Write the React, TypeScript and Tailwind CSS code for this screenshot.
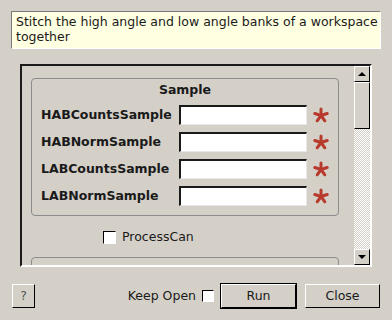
const Star = () => (
  <svg width="16" height="16" viewBox="0 0 16 16" className="shrink-0">
    {[0, 72, 144, 216, 288].map((a) => (
      <line
        key={a}
        x1="8"
        y1="8.5"
        x2="8"
        y2="2"
        stroke="#b83a2c"
        strokeWidth="3"
        strokeLinecap="round"
        transform={`rotate(${a} 8 8.5)`}
      />
    ))}
  </svg>
);

const Field = ({ label }: { label: string }) => (
  <div className="flex h-[20px] items-center">
    <span className="w-[138px] font-bold text-[#1a1a1a]">{label}</span>
    <div className="h-[20px] w-[128px] border-t-2 border-l-2 border-b border-r border-t-[#1a1a1a] border-l-[#1a1a1a] border-b-[#e8e8e8] border-r-[#e8e8e8] bg-white" />
    <div className="ml-[6px]">
      <Star />
    </div>
  </div>
);

const raised = "border border-t-white border-l-white border-b-black border-r-black bg-[#d4d0c8]";

export default function App() {
  return (
    <div
      className="flex h-[320px] w-[392px] flex-col overflow-hidden bg-[#d4d0c8] text-[12.5px] text-[#1a1a1a]"
      style={{ fontFamily: '"DejaVu Sans", sans-serif' }}
    >
      <div className="mx-[11px] mt-[11px] h-[38px] border border-t-[#7a7a7a] border-l-[#7a7a7a] border-b-white border-r-white bg-[#ffffe1] pl-[4px] pt-[2px] text-[12.5px] leading-[15px]">
        Stitch the high angle and low angle banks of a workspace together
      </div>

      <div className="ml-[20px] mt-[15px] flex h-[203px] w-[352px] border-2 border-t-[#1a1a1a] border-l-[#1a1a1a] border-b-white border-r-white">
        <div className="flex-1 overflow-hidden pl-[9px] pt-[12px]">
          <div className="w-[308px] rounded-[4px] border border-[#8c8c8c] pb-[9px] pt-[3px]">
            <div className="text-center font-bold leading-[16px]">Sample</div>
            <div className="mt-[7px] flex flex-col gap-[7px] pl-[9px]">
              <Field label="HABCountsSample" />
              <Field label="HABNormSample" />
              <Field label="LABCountsSample" />
              <Field label="LABNormSample" />
            </div>
          </div>
          <div className="mt-[12px] flex items-center pl-[72px]">
            <div className="h-[13px] w-[13px] border border-t-black border-l-black border-b-white border-r-white bg-white" />
            <span className="ml-[6px]">ProcessCan</span>
          </div>
          <div className="mt-[10px] h-[40px] w-[308px] rounded-[4px] border border-[#8c8c8c] pt-[5px]">
            <div className="text-center font-bold leading-[16px]">Output</div>
          </div>
        </div>
        <div className="flex w-[16px] flex-col">
          <div className={`flex h-[16px] items-center justify-center ${raised}`}>
            <div className="h-0 w-0 border-x-[4px] border-b-[4px] border-x-transparent border-b-black" />
          </div>
          <div className={`h-[47px] ${raised}`} />
          <div className="flex-1 bg-[repeating-conic-gradient(#ffffff_0_25%,#d4d0c8_0_50%)] bg-[length:2px_2px]" />
          <div className={`flex h-[16px] items-center justify-center ${raised}`}>
            <div className="h-0 w-0 border-x-[4px] border-t-[4px] border-x-transparent border-t-black" />
          </div>
        </div>
      </div>

      <div className="mt-[16px] flex items-center px-[12px]">
        <div className={`flex h-[24px] w-[23px] items-center justify-center text-[#555] ${raised}`}>?</div>
        <div className="flex-1" />
        <span>Keep Open</span>
        <div className="ml-[6px] h-[12px] w-[12px] border border-t-black border-l-black border-b-white border-r-white bg-white" />
        <div className="ml-[6px] border border-black">
          <div className={`flex h-[24px] w-[75px] items-center justify-center ${raised}`}>Run</div>
        </div>
        <div className={`ml-[8px] flex h-[24px] w-[75px] items-center justify-center ${raised}`}>Close</div>
      </div>
    </div>
  );
}
